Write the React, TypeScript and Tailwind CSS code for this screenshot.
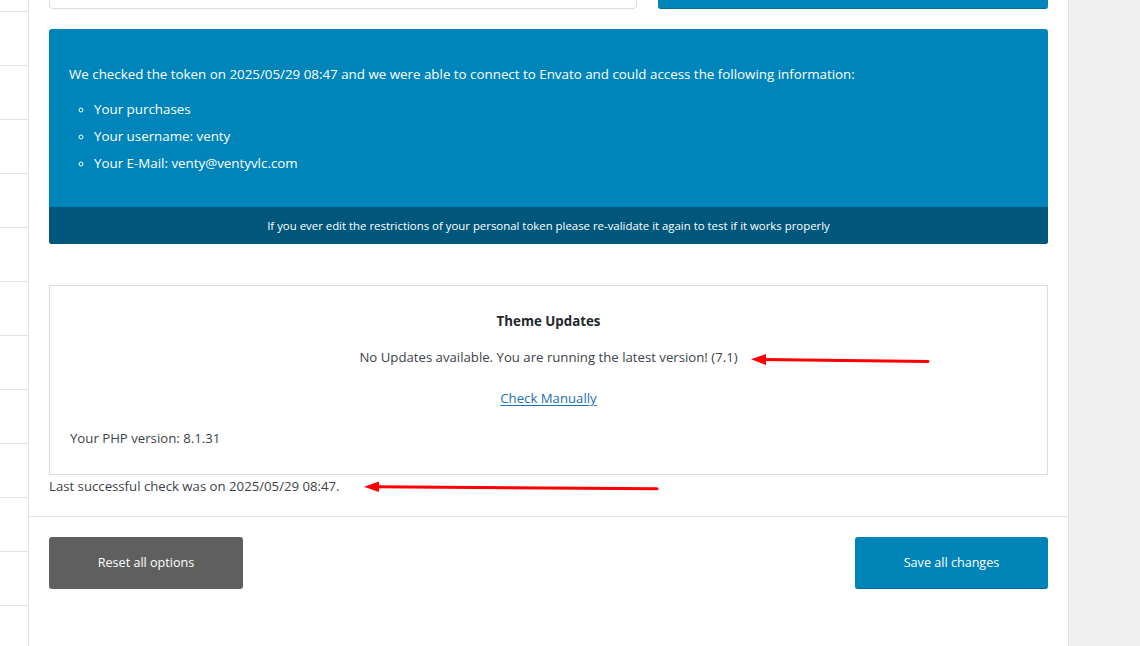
import React from "react";

const font = { fontFamily: '"Open Sans", "Noto Sans", "DejaVu Sans", sans-serif' };

function Sidebar() {
  const rows = Array.from({ length: 11 });
  return (
    <div className="w-[29px] shrink-0 bg-white border-r border-[#e2e2e2] flex flex-col">
      <div className="h-[12px] border-b border-[#e2e2e2] shrink-0" />
      {rows.map((_, i) => (
        <div key={i} className="h-[54px] border-b border-[#e2e2e2] shrink-0" />
      ))}
    </div>
  );
}

export default function App() {
  return (
    <div
      className="relative w-[1140px] h-[646px] overflow-hidden flex bg-[#f0f0f0] text-[#3c434a]"
      style={font}
    >
      <Sidebar />
      <div className="w-[1040px] shrink-0 bg-white border-r border-[#e2e2e2] flex flex-col">
        <div className="px-[20px]">
          <div className="flex gap-[21px] -mt-[32px] h-[41px]">
            <div className="w-[588px] h-full rounded-[4px] border border-[#dcdcde] bg-white" />
            <div className="flex-1 h-full rounded-[3px] bg-[#0085ba] border-b border-[#006f9c]" />
          </div>

          <div className="mt-[20px] rounded-[3px] overflow-hidden bg-[#0085ba] text-white">
            <div className="pt-[35px] pb-[24px] px-[20px] h-[178px]">
              <p className="text-[13.35px] leading-[20px]">
                We checked the token on 2025/05/29 08:47 and we were able to connect to Envato and could access the following information:
              </p>
              <ul className="mt-[15px] pl-[25px] list-[circle] text-[13.35px] leading-[20px] flex flex-col gap-[7px] marker:text-[11px]">
                <li>Your purchases</li>
                <li>Your username: venty</li>
                <li>Your E-Mail: venty@ventyvlc.com</li>
              </ul>
            </div>
            <div className="h-[37px] bg-[#00577b] flex items-center justify-center text-[11.4px] pt-[1px]">
              If you ever edit the restrictions of your personal token please re-validate it again to test if it works properly
            </div>
          </div>

          <div className="mt-[41px] h-[190px] border border-[#dcdcde] flex flex-col text-[13.2px]">
            <div className="mt-[25px] h-[20px] leading-[20px] text-center font-bold text-[#23282d] text-[13.3px]">
              Theme Updates
            </div>
            <div className="mt-[16px] h-[20px] leading-[20px] text-center">
              No Updates available. You are running the latest version! (7.1)
            </div>
            <div className="mt-[21px] h-[20px] leading-[20px] text-center">
              <a className="text-[#2271b1] underline underline-offset-2">Check Manually</a>
            </div>
            <div className="mt-[20px] h-[20px] leading-[20px] pl-[20px]">Your PHP version: 8.1.31</div>
          </div>

          <div className="mt-[1px] h-[20px] leading-[20px] text-[13.2px]">
            Last successful check was on 2025/05/29 08:47.
          </div>
        </div>

        <div className="mt-[20px] border-t border-[#e2e2e2]" />

        <div className="px-[20px] pt-[20px] flex justify-between">
          <button className="w-[194px] h-[52px] rounded-[3px] bg-[#5f5f5f] text-white text-[12.6px]">
            Reset all options
          </button>
          <button className="w-[193px] h-[52px] pt-[1px] rounded-[3px] bg-[#0084b8] border-b border-[#006799] text-white text-[12.6px]">
            Save all changes
          </button>
        </div>
      </div>
      <div className="flex-1" />

      <svg className="absolute left-0 top-0 pointer-events-none" width="1140" height="646">
        <line x1="762" y1="359.5" x2="928" y2="361.5" stroke="#ff0000" strokeWidth="3" strokeLinecap="round" />
        <polygon points="751,359.3 766,354 766,365" fill="#ff0000" />
        <line x1="375" y1="486.7" x2="657" y2="488.7" stroke="#ff0000" strokeWidth="3" strokeLinecap="round" />
        <polygon points="364,486.7 379,481.5 379,492" fill="#ff0000" />
      </svg>
    </div>
  );
}
